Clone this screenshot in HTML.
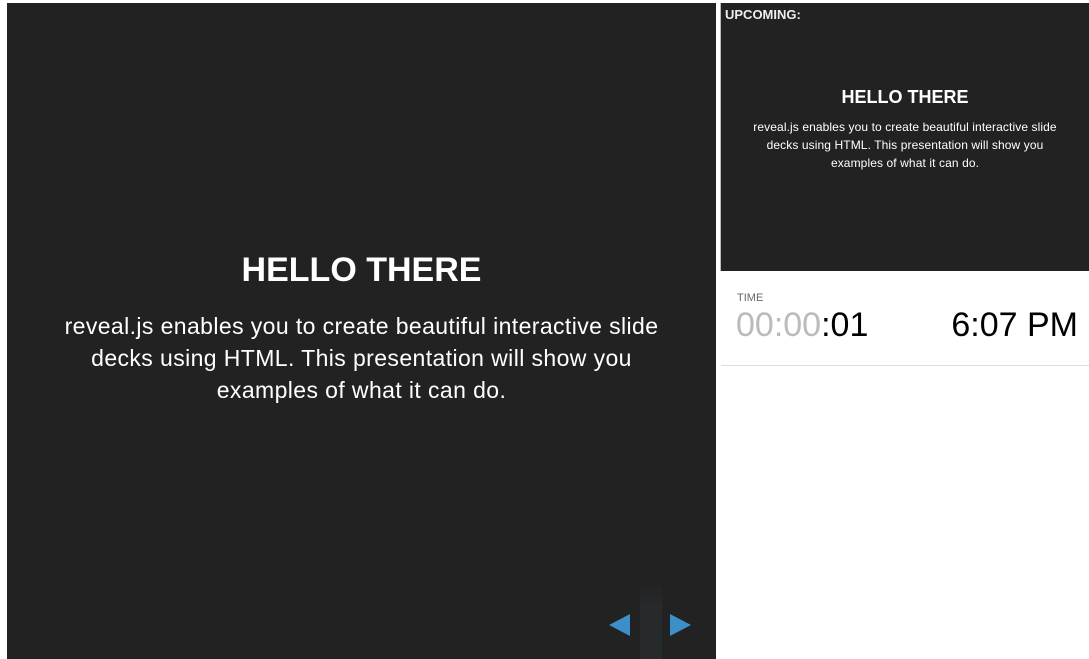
<!DOCTYPE html>
<html><head><meta charset="utf-8"><style>
body{margin:0;width:1089px;height:659px;background:#fff;position:relative;overflow:hidden;font-family:"Liberation Sans",sans-serif}
.main{position:absolute;left:7px;top:3px;width:709px;height:656px;background:#222}
.up{position:absolute;left:721px;top:3px;width:368px;height:268px;background:#222;box-shadow:-1px 0 0 #bbb}
.c{position:absolute;left:0;right:0;text-align:center;color:#fff;white-space:nowrap}
</style></head><body>
<div class="main">
<div class="c" style="top:248px;font-size:34px;font-weight:bold">HELLO THERE</div>
<div class="c" style="top:307px;font-size:23px;line-height:32px;letter-spacing:0.4px">reveal.js enables you to create beautiful interactive slide<br>decks using HTML. This presentation will show you<br>examples of what it can do.</div>
<svg style="position:absolute;left:600px;top:580px" width="90" height="76"><defs><linearGradient id="g" x1="0" y1="0" x2="0" y2="1"><stop offset="0" stop-color="#222"/><stop offset="0.3" stop-color="#262a2b"/><stop offset="1" stop-color="#262a2b"/></linearGradient></defs><rect x="33" y="0" width="22" height="76" fill="url(#g)"/><polygon points="2,42 23,31 23,53" fill="#3d8fc9"/><polygon points="84,42 63,31 63,53" fill="#3d8fc9"/></svg>
</div>
<div class="up">
<div style="position:absolute;left:4px;top:4px;color:#eee;font-size:13px;font-weight:bold">UPCOMING:</div>
<div class="c" style="top:84px;font-size:18px;font-weight:bold">HELLO THERE</div>
<div class="c" style="top:115px;font-size:12px;line-height:18px;letter-spacing:0.1px">reveal.js enables you to create beautiful interactive slide<br>decks using HTML. This presentation will show you<br>examples of what it can do.</div>
</div>
<div style="position:absolute;left:737px;top:292px;font-size:11px;color:#666">TIME</div>
<div style="position:absolute;left:736px;top:306px;font-size:34px;color:#000"><span style="color:#bbb">00:00</span>:01</div>
<div style="position:absolute;right:11px;top:306px;font-size:34px;color:#000">6:07 PM</div>
<div style="position:absolute;left:721px;top:365px;width:368px;height:1px;background:#ddd"></div>
</body></html>
